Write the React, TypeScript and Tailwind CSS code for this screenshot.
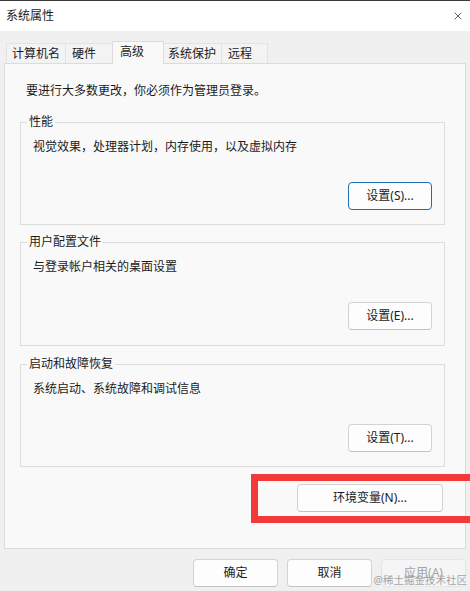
import { X } from 'lucide-react';

const tabs = [
  { label: '计算机名', w: 'w-[60px]', pl: 'pl-[5px]', active: false },
  { label: '硬件', w: 'w-[48px]', pl: 'pl-[6px]', active: false },
  { label: '高级', w: 'w-[52px]', pl: 'pl-[7px]', active: true },
  { label: '系统保护', w: 'w-[59px]', pl: 'pl-[4px]', active: false },
  { label: '远程', w: 'w-[47px]', pl: 'pl-[6px]', active: false },
];

const groups = [
  { title: '性能', desc: '视觉效果，处理器计划，内存使用，以及虚拟内存', btn: '设置(S)...', focus: true, h: 'h-[103px]', mt: 'mt-[23px]' },
  { title: '用户配置文件', desc: '与登录帐户相关的桌面设置', btn: '设置(E)...', focus: false, h: 'h-[104px]', mt: 'mt-[17px]' },
  { title: '启动和故障恢复', desc: '系统启动、系统故障和调试信息', btn: '设置(T)...', focus: false, h: 'h-[103px]', mt: 'mt-[18px]' },
];

function WinButton({ label, className = '', focus = false, disabled = false }: { label: string; className?: string; focus?: boolean; disabled?: boolean }) {
  return (
    <div
      className={
        'h-[28px] flex items-center justify-center rounded-[4px] border leading-[16px] ' +
        (disabled
          ? 'bg-[#f5f5f5] border-[#e5e5e5] text-[#a3a3a3] '
          : focus
          ? 'bg-[#fdfdfd] border-[#1f6db3] text-[#1b1b1b] '
          : 'bg-[#fdfdfd] border-[#d3d3d3] border-b-[#c2c2c2] text-[#1b1b1b] ') +
        className
      }
    >
      {label}
    </div>
  );
}

export default function App() {
  return (
    <div className="relative w-[470px] h-[591px] overflow-hidden bg-[#f0f0f0] text-[12px] text-[#1b1b1b] font-['Noto_Sans','Noto_Sans_CJK_SC',sans-serif]">
      {/* Title bar */}
      <div className="h-[31px] bg-white border-t border-[#3a3a3a] flex items-center justify-between pl-[6px] pr-[6px]">
        <span className="leading-[16px]">系统属性</span>
        <X className="w-[12px] h-[12px] text-[#1b1b1b]" strokeWidth={1.4} />
      </div>

      {/* Tabs */}
      <div className="flex items-end pl-[6px] pt-[10px]">
        {tabs.map((t, i) => (
          <div
            key={t.label}
            className={
              'relative leading-[16px] pt-[2px] border-t border-l border-r ' +
              t.w + ' ' + t.pl + ' ' +
              (i > 0 ? '-ml-[1px] ' : '') +
              (t.active
                ? 'z-10 h-[23px] -mb-[1px] bg-[#f9f9f9] border-[#dcdcdc]'
                : 'h-[20px] bg-[#f3f3f3] border-[#e3e3e3]')
            }
          >
            {t.label}
          </div>
        ))}
      </div>

      {/* Tab panel */}
      <div className="ml-[4px] w-[462px] h-[486px] border border-[#dcdcdc] bg-[#f9f9f9] pl-[15px] pr-[20px] pt-[19px]">
        <p className="pl-[6px] leading-[16px]">要进行大多数更改，你必须作为管理员登录。</p>

        {groups.map((g) => (
          <div key={g.title} className={'relative border border-[#dcdcdc] pl-[12px] pr-[12px] pt-[16px] ' + g.h + ' ' + g.mt}>
            <span className="absolute top-[-9px] left-[6px] bg-[#f9f9f9] px-[2px] leading-[16px]">{g.title}</span>
            <p className="leading-[16px]">{g.desc}</p>
            <div className="flex justify-end mt-[27px]">
              <WinButton label={g.btn} focus={g.focus} className="w-[84px]" />
            </div>
          </div>
        ))}

        <div className="flex justify-end mt-[17px] pr-[2px]">
          <WinButton label="环境变量(N)..." className="w-[146px]" />
        </div>
      </div>

      {/* Dialog buttons */}
      <div className="flex justify-end gap-[9px] pr-[4px] mt-[10px]">
        <WinButton label="确定" className="w-[85px]" />
        <WinButton label="取消" className="w-[85px]" />
        <WinButton label="应用(A)" className="w-[85px]" disabled />
      </div>

      {/* Annotation */}
      <div className="absolute left-[251px] top-[474px] w-[230px] h-[49px] border-[7px] border-[#f33a3a]" />

      {/* Watermark */}
      <span className="absolute right-[3px] bottom-[4px] text-[10.5px] leading-[14px] text-[#a5a5a5]">@稀土掘金技术社区</span>
    </div>
  );
}
